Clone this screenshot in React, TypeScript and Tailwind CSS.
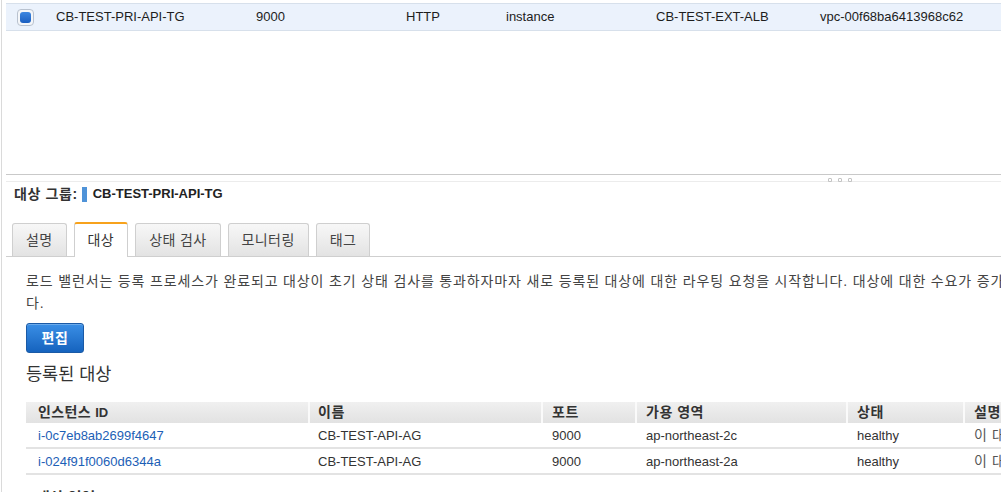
import React from "react";

const font = "font-['Liberation_Sans','Noto_Sans_CJK_KR',sans-serif]";

const targets = [
  { id: "i-0c7eb8ab2699f4647", name: "CB-TEST-API-AG", port: "9000", zone: "ap-northeast-2c", status: "healthy", desc: "이 대상은 정상입니다" },
  { id: "i-024f91f0060d6344a", name: "CB-TEST-API-AG", port: "9000", zone: "ap-northeast-2a", status: "healthy", desc: "이 대상은 정상입니다" },
];

const tabs = ["설명", "대상", "상태 검사", "모니터링", "태그"];

const cols = "grid grid-cols-[282px_233px_94px_211px_117px_200px]";

function Checkbox() {
  return (
    <div className="w-[17px] h-[17px] rounded-[4px] border border-[#b9c2cf] bg-[#f4f6f9] p-[2px]">
      <div className="w-full h-full rounded-[3px] bg-gradient-to-b from-[#3c86e0] to-[#1b5fc1]" />
    </div>
  );
}

export default function App() {
  return (
    <div className={`w-[1001px] h-[492px] overflow-hidden bg-white text-[13px] ${font}`}>
      <div className="ml-[1px] h-full w-[1250px] border-l border-[#dadada] pl-[4px]">
        {/* target group list */}
        <div className="h-[174px] pt-[3px]">
          <div className="h-[28px] flex items-center bg-[#ebf2fc] border-y border-[#d7e0eb] text-[#1d1d1d]">
            <div className="w-[50px] pl-[11px]">
              <Checkbox />
            </div>
            <div className="w-[200px]">CB-TEST-PRI-API-TG</div>
            <div className="w-[150px]">9000</div>
            <div className="w-[100px]">HTTP</div>
            <div className="w-[150px]">instance</div>
            <div className="w-[164px]">CB-TEST-EXT-ALB</div>
            <div>vpc-00f68ba6413968c62</div>
          </div>
        </div>

        {/* split handle */}
        <div className="h-[7px] border-t border-[#c9c9c9]" />
        <div className="relative border-t border-[#ececec]">
          <div className="absolute left-[822px] -top-[4px] flex gap-[6px]">
            <div className="w-[4px] h-[4px] border border-[#c4c4c4] rounded-t-[1px]" />
            <div className="w-[4px] h-[4px] border border-[#c4c4c4] rounded-t-[1px]" />
            <div className="w-[4px] h-[4px] border border-[#c4c4c4] rounded-t-[1px]" />
          </div>
        </div>

        {/* details */}
        <div className="mt-[1px] h-[22px] flex items-center pl-[8px] text-[#333]">
          <span className="text-[14px] font-semibold tracking-[0.6px]">대상 그룹:</span>
          <span className="ml-[4px] w-[5px] h-[15px] bg-[#4f93d8]" />
          <span className="ml-[6px] font-bold text-[#222]">CB-TEST-PRI-API-TG</span>
        </div>

        <div className="mt-[17px] flex items-end gap-[7px] pl-[6px] border-b border-[#cfcfcf]">
          {tabs.map((t) =>
            t === "대상" ? (
              <div
                key={t}
                className="h-[35px] -mb-px px-[13px] flex items-center bg-white border-x border-[#cfcfcf] border-t-2 border-t-[#f7a21c] rounded-t-[3px] text-[#333] text-[14px] tracking-[0.4px]"
              >
                {t}
              </div>
            ) : (
              <div
                key={t}
                className="h-[33px] px-[13px] flex items-center bg-gradient-to-b from-[#f7f7f7] to-[#e3e3e3] border-x border-t border-[#cfcfcf] rounded-t-[3px] text-[#444] text-[14px] tracking-[0.4px]"
              >
                {t}
              </div>
            )
          )}
        </div>

        <div className="pl-[20px] pt-[13px]">
          <p className="leading-[22px] text-[14px] text-[#444] tracking-[0.85px]">
            <span className="block whitespace-nowrap">
              로드 밸런서는 등록 프로세스가 완료되고 대상이 초기 상태 검사를 통과하자마자 새로 등록된 대상에 대한 라우팅 요청을 시작합니다. 대상에 대한 수요가 증가하면 대상을 추가로 등록할 수 있습니
            </span>
            <span className="block">다.</span>
          </p>

          <button className="mt-[9px] w-[58px] h-[30px] rounded-[3px] border border-[#1a5aa6] bg-gradient-to-b from-[#3a8fe6] to-[#1563be] text-white text-[14px] font-bold tracking-[0.5px] shadow-[inset_0_1px_0_rgba(255,255,255,0.25)]">
            편집
          </button>

          <h3 className="mt-[10px] h-[22px] leading-[22px] text-[17.5px] text-[#333]">등록된 대상</h3>

          <div className="mt-[17px]">
            <div className={`${cols} h-[21px] bg-gradient-to-b from-[#f0f0f0] to-[#e2e2e2] text-[#333] font-semibold`}>
              <div className="flex items-center gap-[4px] pl-[12px]">
                <span className="text-[14px] tracking-[0.4px]">인스턴스</span>
                <span className="font-bold">ID</span>
              </div>
              <div className="flex items-center pl-[8px] border-l-2 border-[#fafafa] text-[14px] tracking-[0.5px]">이름</div>
              <div className="flex items-center pl-[9px] border-l-2 border-[#fafafa] text-[14px] tracking-[0.5px]">포트</div>
              <div className="flex items-center pl-[9px] border-l-2 border-[#fafafa] text-[14px] tracking-[0.5px]">가용 영역</div>
              <div className="flex items-center pl-[9px] border-l-2 border-[#fafafa] text-[14px] tracking-[0.5px]">상태</div>
              <div className="flex items-center pl-[9px] border-l-2 border-[#fafafa] text-[14px] tracking-[0.5px]">설명</div>
            </div>
            {targets.map((r) => (
              <div key={r.id} className={`${cols} h-[26px] border-b-2 border-[#e3e3e3] text-[#333]`}>
                <div className="flex items-center pl-[12px] pt-[1px] text-[#1c60b6]">{r.id}</div>
                <div className="flex items-center pl-[10px] pt-[1px]">{r.name}</div>
                <div className="flex items-center pl-[11px] pt-[1px]">{r.port}</div>
                <div className="flex items-center pl-[11px] pt-[1px]">{r.zone}</div>
                <div className="flex items-center pl-[11px] pt-[1px]">{r.status}</div>
                <div className="flex items-center pl-[11px] pt-[1px] text-[#555] text-[14px] tracking-[0.6px]">{r.desc}</div>
              </div>
            ))}
          </div>

          <h4 className="mt-[12px] pl-[10px] font-bold text-[15px] text-[#333]">대상 영역</h4>
        </div>
      </div>
    </div>
  );
}
